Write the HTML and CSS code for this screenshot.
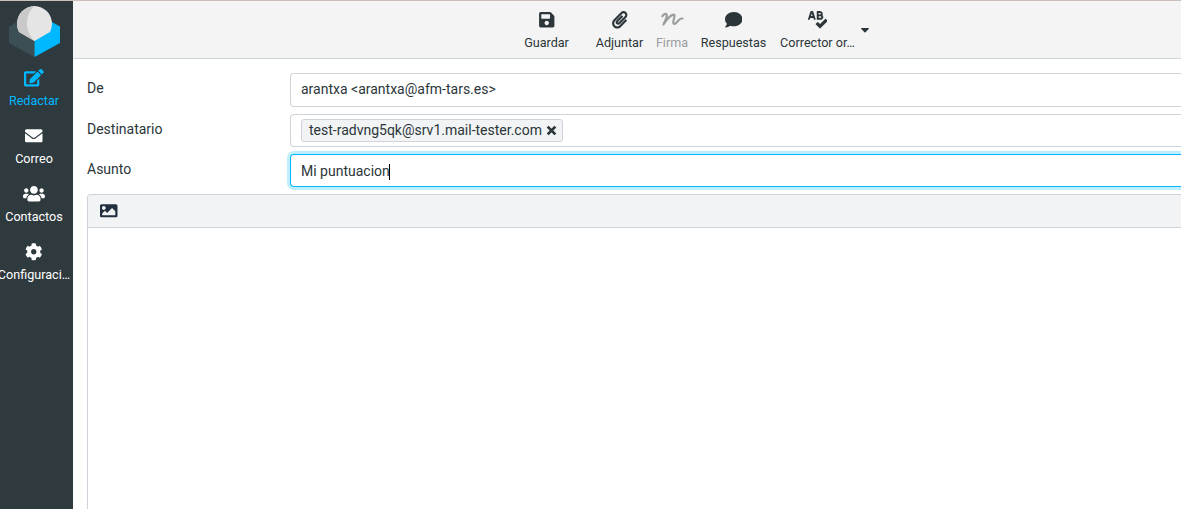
FILE: index.html
```html
<!DOCTYPE html>
<html lang="es">
<head>
<meta charset="utf-8">
<title>Redactar</title>
<link rel="stylesheet" href="styles.css">
</head>
<body>
<div class="app">
  <nav class="sidebar">
    <svg class="logo" viewBox="0 0 51 51">
      <path fill="#3c4f55" d="M0 20.500L8 16 25.500 34V51L0 37z"/>
      <path fill="#00b8ff" d="M51 20.500L43 16 25.500 34V51L51 37z"/>
      <path fill="#e5e5e5" d="M25.500 0A17.700 17.700 0 0 1 43 18q0 4-2 8L25.500 35 10 26Q8 22 8 18A17.700 17.700 0 0 1 25.500 0z"/>
      <path fill="#c9c9c9" d="M25.500 0C15.500 9 15.500 25 25.500 35L10 26Q8 22 8 18A17.700 17.700 0 0 1 25.500 0z"/>
    </svg>
    <a class="task task-active">
      <svg class="icon icon-wide" viewBox="0 0 576 512"><path d="M402.600 83.200l90.200 90.200c3.800 3.800 3.800 10 0 13.800L274.400 405.600l-92.800 10.300c-12.400 1.400-22.900-9.100-21.500-21.500l10.300-92.800L388.800 83.200c3.800-3.800 10-3.800 13.800 0zm162-22.900l-48.800-48.800c-15.200-15.200-39.900-15.200-55.200 0l-35.400 35.400c-3.800 3.800-3.800 10 0 13.800l90.200 90.200c3.800 3.800 10 3.800 13.800 0l35.400-35.400c15.200-15.300 15.200-40 0-55.200zM384 346.200V448H64V128h229.800c3.200 0 6.200-1.300 8.500-3.500l40-40c7.600-7.600 2.200-20.500-8.500-20.500H48C21.500 64 0 85.500 0 112v352c0 26.500 21.500 48 48 48h352c26.500 0 48-21.500 48-48V306.200c0-10.700-12.900-16-20.500-8.500l-40 40c-2.200 2.300-3.500 5.300-3.500 8.500z"/></svg>
      <span>Redactar</span>
    </a>
    <a class="task">
      <svg class="icon" viewBox="0 0 512 512"><path d="M502.300 190.800c3.900-3.100 9.700-.2 9.700 4.700V400c0 26.500-21.500 48-48 48H48c-26.500 0-48-21.500-48-48V195.600c0-5 5.700-7.800 9.700-4.700 22.400 17.400 52.100 39.500 154.100 113.600 21.100 15.400 56.700 47.800 92.200 47.600 35.700.3 72-32.800 92.300-47.600 102-74.100 131.600-96.300 154-113.700zM256 320c23.200.4 56.600-29.200 73.400-41.400 132.700-96.300 142.800-104.700 173.400-128.700 5.800-4.500 9.200-11.500 9.200-18.900v-19c0-26.500-21.500-48-48-48H48c-26.500 0-48 21.500-48 48v19c0 7.400 3.400 14.300 9.200 18.900 30.600 23.900 40.700 32.400 173.400 128.700 16.800 12.200 50.200 41.800 73.400 41.400z"/></svg>
      <span>Correo</span>
    </a>
    <a class="task">
      <svg class="icon icon-wider" viewBox="0 0 640 512"><path d="M96 224c35.300 0 64-28.700 64-64s-28.700-64-64-64-64 28.700-64 64 28.700 64 64 64zm448 0c35.300 0 64-28.700 64-64s-28.700-64-64-64-64 28.700-64 64 28.700 64 64 64zm32 32h-64c-17.600 0-33.500 7.100-45.100 18.600 40.300 22.100 68.900 62 75.100 109.400h66c17.700 0 32-14.300 32-32v-32c0-35.300-28.700-64-64-64zm-256 0c61.900 0 112-50.100 112-112S381.900 32 320 32 208 82.100 208 144s50.100 112 112 112zm76.800 32h-8.300c-20.800 10-43.900 16-68.500 16s-47.600-6-68.500-16h-8.300C179.600 288 128 339.600 128 403.200V432c0 26.500 21.500 48 48 48h288c26.500 0 48-21.500 48-48v-28.800c0-63.600-51.600-115.200-115.200-115.200zm-223.700-13.400C161.500 263.100 145.600 256 128 256H64c-35.300 0-64 28.700-64 64v32c0 17.700 14.300 32 32 32h65.900c6.300-47.400 34.900-87.300 75.200-109.400z"/></svg>
      <span>Contactos</span>
    </a>
    <a class="task">
      <svg class="icon" viewBox="0 0 512 512"><path d="M487.400 315.700l-42.600-24.600c4.300-23.200 4.300-47 0-70.200l42.600-24.600c4.900-2.800 7.100-8.600 5.500-14-11.100-35.600-30-67.800-54.700-94.600-3.800-4.100-10-5.100-14.800-2.300L380.800 110c-17.900-15.400-38.500-27.300-60.800-35.100V25.800c0-5.600-3.900-10.500-9.400-11.700-36.700-8.200-74.300-7.800-109.200 0-5.500 1.200-9.400 6.100-9.400 11.700V75c-22.200 7.900-42.800 19.800-60.800 35.100L88.700 85.500c-4.900-2.800-11-1.900-14.800 2.300-24.700 26.700-43.600 58.900-54.700 94.600-1.700 5.400.6 11.200 5.500 14L67.300 221c-4.300 23.200-4.300 47 0 70.200l-42.600 24.600c-4.900 2.800-7.100 8.600-5.500 14 11.100 35.600 30 67.800 54.700 94.600 3.800 4.100 10 5.100 14.800 2.300l42.600-24.600c17.900 15.400 38.500 27.300 60.800 35.100v49.200c0 5.600 3.900 10.500 9.400 11.700 36.700 8.200 74.300 7.800 109.200 0 5.500-1.200 9.400-6.100 9.400-11.700v-49.200c22.200-7.900 42.800-19.800 60.800-35.100l42.600 24.600c4.900 2.800 11 1.900 14.800-2.300 24.700-26.700 43.600-58.900 54.700-94.600 1.500-5.500-.7-11.300-5.600-14.100zM256 336c-44.100 0-80-35.900-80-80s35.900-80 80-80 80 35.900 80 80-35.900 80-80 80z"/></svg>
      <span>Configuraci…</span>
    </a>
  </nav>
  <main class="content">
    <header class="toolbar">
      <a class="tool tool-save">
        <svg class="icon" viewBox="0 0 448 512"><path d="M433.941 129.941l-83.882-83.882A48 48 0 0 0 316.118 32H48C21.490 32 0 53.490 0 80v352c0 26.510 21.490 48 48 48h352c26.510 0 48-21.490 48-48V163.882a48 48 0 0 0-14.059-33.941zM224 416c-35.346 0-64-28.654-64-64 0-35.346 28.654-64 64-64s64 28.654 64 64c0 35.346-28.654 64-64 64zm96-304.520V212c0 6.627-5.373 12-12 12H76c-6.627 0-12-5.373-12-12V108c0-6.627 5.373-12 12-12h228.520c3.183 0 6.235 1.264 8.485 3.515l3.480 3.480A11.996 11.996 0 0 1 320 111.480z"/></svg>
        <span>Guardar</span>
      </a>
      <a class="tool tool-attach">
        <svg class="icon" viewBox="0 0 448 512"><path d="M43.246 466.142c-58.430-60.289-57.341-157.511 1.386-217.581L254.392 34c44.316-45.332 116.351-45.336 160.671 0 43.890 44.894 43.943 117.329 0 162.276L232.214 383.128c-29.855 30.537-78.633 30.111-107.982-.998-28.275-29.970-27.368-77.473 1.452-106.953l143.743-146.835c6.182-6.314 16.312-6.422 22.626-.241l22.861 22.379c6.315 6.182 6.422 16.312.241 22.626L171.427 319.927c-4.932 5.045-5.236 13.428-.648 18.292 4.372 4.634 11.245 4.711 15.688.165l182.849-186.851c19.613-20.062 19.613-52.725-.011-72.798-19.189-19.627-49.957-19.637-69.154 0L90.390 293.295c-34.763 35.560-35.299 93.120-1.191 128.313 34.010 35.093 88.985 35.137 123.058.286l172.060-175.999c6.177-6.319 16.307-6.433 22.626-.256l22.877 22.364c6.319 6.177 6.434 16.307.256 22.626l-172.060 175.998c-59.576 60.938-155.943 60.216-214.770-.485z"/></svg>
        <span>Adjuntar</span>
      </a>
      <a class="tool tool-sign">
        <svg class="icon icon-sign" viewBox="0 0 24 17.5"><path d="M2.300 5.300C3.500 3 6.300 1.900 6.800 4 7.100 6.500 5 10 3.400 13.400 6.500 9 10 4.200 13.500 3.700c2.800-.1-.8 5.300-.2 8.100.9 2.800 3.800-.8 5.200-2.500q2-2 4-1.800"/></svg>
        <span>Firma</span>
      </a>
      <a class="tool tool-replies">
        <svg class="icon" viewBox="0 0 512 512"><path d="M256 32C114.600 32 0 125.100 0 240c0 49.600 21.400 95 57 130.700C44.500 421.100 2.700 466 2.200 466.500c-2.200 2.300-2.800 5.700-1.500 8.700S4.800 480 8 480c66.300 0 116-31.800 140.600-51.400 32.700 12.300 69 19.400 107.400 19.400 141.400 0 256-93.100 256-208S397.400 32 256 32z"/></svg>
        <span>Respuestas</span>
      </a>
      <a class="tool tool-spell">
        <svg class="icon icon-wide" viewBox="0 0 576 512"><path d="M272 256h91.360c43.200 0 82-32.200 84.510-75.340a79.820 79.820 0 0 0-25.260-63.070 79.810 79.810 0 0 0 9.060-44.910C427.900 30.570 389.300 0 347 0h-75a16 16 0 0 0-16 16v224a16 16 0 0 0 16 16zm40-200h40a24 24 0 0 1 0 48h-40zm0 96h56a24 24 0 0 1 0 48h-56zM155.120 22.250A32 32 0 0 0 124.640 0H99.360a32 32 0 0 0-30.480 22.250L.59 235.730A16 16 0 0 0 16 256h24.930a16 16 0 0 0 15.420-11.730L68.290 208h87.420l11.940 36.270A16 16 0 0 0 183.070 256H208a16 16 0 0 0 15.420-20.270zM89.370 144L112 75.300l22.630 68.700zm482 132.480l-45.210-45.300a15.880 15.880 0 0 0-22.590 0l-151.500 151.500-55.410-55.500a15.880 15.880 0 0 0-22.590 0l-45.300 45.300a16 16 0 0 0 0 22.590l112 112.210a15.890 15.890 0 0 0 22.600 0l208-208.210a16 16 0 0 0-.02-22.590z"/></svg>
        <span>Corrector or…</span>
      </a>
      <svg class="caret" viewBox="0 0 8 5"><path d="M.5 0h7q.7.300.2 1L4.500 4.300q-.5.400-1 0L.3 1Q-.2.300.5 0z"/></svg>
    </header>
    <form class="compose">
      <div class="row row-from">
        <label class="label">De</label>
        <div class="field">arantxa &lt;arantxa@afm-tars.es&gt;</div>
      </div>
      <div class="row row-to">
        <label class="label">Destinatario</label>
        <div class="field">
          <span class="recipient">test-radvng5qk@srv1.mail-tester.com
            <svg class="remove" viewBox="0 0 10 10"><path d="M1.500 1.500l7 7m0-7l-7 7"/></svg>
          </span>
        </div>
      </div>
      <div class="row row-subject">
        <label class="label">Asunto</label>
        <div class="field field-focus">Mi puntuacion<span class="cursor"></span></div>
      </div>
      <section class="editor">
        <div class="editor-bar">
          <svg class="icon" viewBox="0 0 512 512"><path d="M464 448H48c-26.510 0-48-21.490-48-48V112c0-26.510 21.490-48 48-48h416c26.510 0 48 21.490 48 48v288c0 26.510-21.490 48-48 48zM112 120c-30.928 0-56 25.072-56 56s25.072 56 56 56 56-25.072 56-56-25.072-56-56-56zM64 384h384V272l-87.515-87.515c-4.686-4.686-12.284-4.686-16.971 0L208 320l-55.515-55.515c-4.686-4.686-12.284-4.686-16.971 0L64 336v48z"/></svg>
        </div>
      </section>
    </form>
  </main>
</div>
</body>
</html>
```
FILE: styles.css
```css
* { box-sizing: border-box; }

body {
  margin: 0;
  overflow: hidden;
  font: 14px/21px Roboto, sans-serif;
  color: #2c363a;
  background: #fff;
}

.app {
  display: flex;
  height: 509px;
  border-top: 1px solid #cbbfb9;
}

.icon {
  display: block;
  width: 17.5px;
  height: 17.5px;
  fill: currentColor;
}
.icon-wide { width: 19.7px; }
.icon-wider { width: 21.9px; }

/* Task menu */
.sidebar {
  flex: none;
  width: 73px;
  padding: 5px 5px 0 0;
  display: flex;
  flex-direction: column;
  align-items: center;
  overflow: hidden;
  background: #2f3a3f;
  color: #fff;
}
.logo {
  flex: none;
  width: 51px;
  height: 51px;
  margin: 0 0 4px 1px;
}
.task {
  flex: none;
  height: 58px;
  padding-top: 8px;
  display: flex;
  flex-direction: column;
  align-items: center;
  font-size: 12.6px;
  line-height: 19px;
  white-space: nowrap;
}
.task span { margin-top: 4px; }
.task-active { color: #00b8ff; }

/* Toolbar */
.content {
  flex: 1;
  min-width: 0;
  display: flex;
  flex-direction: column;
}
.toolbar {
  flex: none;
  height: 58px;
  padding: 10px 0 0 451px;
  display: flex;
  background: #f4f4f4;
  border-bottom: 1px solid #ccd8d8;
}
.tool {
  display: flex;
  flex-direction: column;
  align-items: center;
  font-size: 12.6px;
  line-height: 19px;
  white-space: nowrap;
}
.tool span { margin-top: 4px; }
.tool-save { width: 45px; }
.tool-attach { width: 47px; margin-left: 27px; }
.tool-sign { width: 32px; margin-left: 13px; color: #999d9e; }
.tool-replies { width: 66px; margin-left: 12.5px; }
.tool-spell { width: 77px; margin-left: 12.5px; }
.icon-sign {
  width: 24px;
  fill: none;
  stroke: currentColor;
  stroke-width: 2.2;
  stroke-linecap: round;
  stroke-linejoin: round;
}
.caret {
  width: 8px;
  height: 5px;
  margin: 17px 0 0 5px;
  fill: #2c363a;
}

/* Compose form */
.compose {
  flex: 1;
  padding: 14px 0 0 14px;
  display: flex;
  flex-direction: column;
}
.row {
  flex: none;
  display: flex;
  margin-bottom: 7px;
}
.label {
  width: 203px;
  padding-top: 5px;
}
.field {
  flex: 1;
  display: flex;
  align-items: center;
  height: 33px;
  padding-left: 10px;
  border: 1px solid #ced4da;
  border-right: 0;
  border-radius: 4px 0 0 4px;
}
.row-from .field { height: 34px; padding-bottom: 2px; }
.row-subject .field { padding-top: 2px; }
.field-focus {
  border-color: #00b8ff;
  box-shadow: 0 0 0 3px #bfefff;
}
.recipient {
  display: flex;
  align-items: center;
  height: 23px;
  padding: 0 5px 0 7px;
  border: 1px solid #ced4da;
  border-radius: 3px;
  background: #f1f3f4;
}
.remove {
  width: 11px;
  height: 11px;
  margin-left: 4px;
  fill: none;
  stroke: #2c363a;
  stroke-width: 2.5;
}
.cursor {
  width: 1px;
  height: 16px;
  margin-left: -1px;
  background: #000;
}
.editor {
  flex: 1;
  border: solid #ced4da;
  border-width: 1px 0 0 1px;
  border-radius: 4px 0 0 0;
}
.editor-bar {
  height: 33px;
  padding: 7px 0 0 12px;
  background: #f1f3f4;
  border-bottom: 1px solid #ced4da;
  border-radius: 3px 0 0 0;
  color: #222f3e;
}
```
